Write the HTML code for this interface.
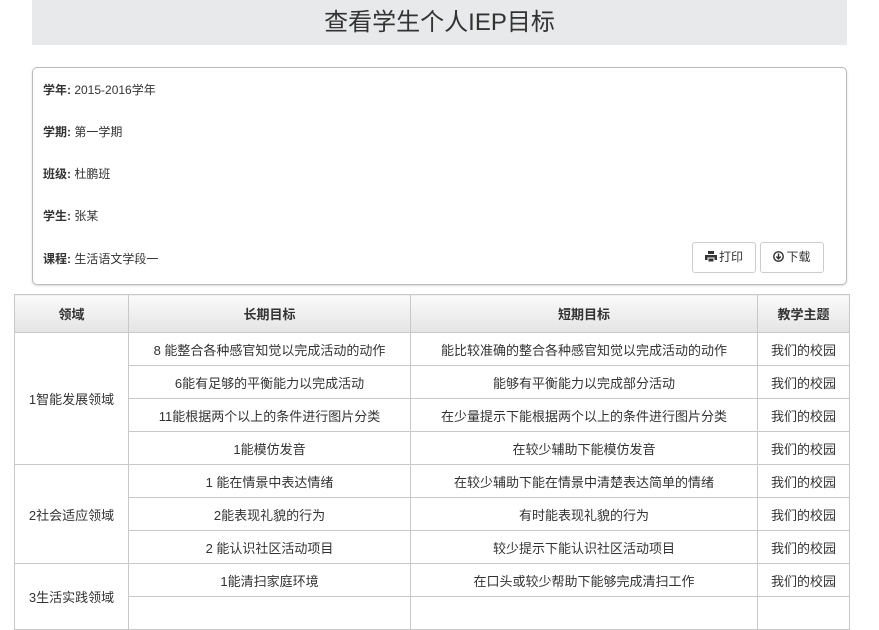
<!DOCTYPE html>
<html><head><meta charset="utf-8"><style>
body{margin:0;width:879px;height:600px;overflow:hidden;background:#fff;font-family:"Liberation Sans","Noto Sans CJK SC",sans-serif;color:#333}
.hd{position:absolute;left:32px;top:0;width:815px;height:45px;background:#e8e9ea;text-align:center;font-size:24px;line-height:46px;color:#333}
.box{position:absolute;left:32px;top:67px;width:813px;height:216px;border:1px solid #bbb;border-radius:5px;box-shadow:0 1px 2px rgba(0,0,0,.15)}
.row{position:absolute;left:10px;font-size:12px;line-height:14px}
.btn{position:absolute;top:174px;height:29px;width:62px;border:1px solid #ccc;border-radius:3px;font-size:12px;line-height:29px;text-align:center;background:#fff}
.btn svg{vertical-align:-1px;margin-right:2px}
table{position:absolute;left:14px;top:294px;width:836px;border-collapse:collapse;font-size:13px}
td,th{border:1px solid #c8c8c8;text-align:center;height:32px;padding:0}
th{height:37px;background:linear-gradient(#fafafa,#e4e4e4);font-weight:bold}
</style></head><body>
<div class="hd">查看学生个人IEP目标</div>
<div class="box">
<div class="row" style="top:15px"><b>学年:</b> 2015-2016学年</div>
<div class="row" style="top:57px"><b>学期:</b> 第一学期</div>
<div class="row" style="top:99px"><b>班级:</b> 杜鹏班</div>
<div class="row" style="top:141px"><b>学生:</b> 张某</div>
<div class="row" style="top:184px"><b>课程:</b> 生活语文学段一</div>
<div class="btn" style="left:659px"><svg width="12" height="11" viewBox="0 0 12 11"><rect x="3" y="0" width="6" height="3" fill="#333"/><rect x="0" y="4" width="12" height="5" fill="#333"/><rect x="3" y="7" width="6" height="4" fill="#333" stroke="#fff" stroke-width="1"/></svg>打印</div>
<div class="btn" style="left:727px"><svg width="11" height="11" viewBox="0 0 11 11"><circle cx="5.5" cy="5.5" r="4.7" fill="none" stroke="#333" stroke-width="1.4"/><path d="M5.5 2.5v5M3.3 5.5l2.2 2.3 2.2-2.3" fill="none" stroke="#333" stroke-width="1.4"/></svg>下载</div>
</div>
<table>
<tr><th style="width:113px">领域</th><th style="width:281px">长期目标</th><th style="width:346px">短期目标</th><th>教学主题</th></tr>
<tr><td rowspan="4">1智能发展领域</td><td>8 能整合各种感官知觉以完成活动的动作</td><td>能比较准确的整合各种感官知觉以完成活动的动作</td><td>我们的校园</td></tr>
<tr><td>6能有足够的平衡能力以完成活动</td><td>能够有平衡能力以完成部分活动</td><td>我们的校园</td></tr>
<tr><td>11能根据两个以上的条件进行图片分类</td><td>在少量提示下能根据两个以上的条件进行图片分类</td><td>我们的校园</td></tr>
<tr><td>1能模仿发音</td><td>在较少辅助下能模仿发音</td><td>我们的校园</td></tr>
<tr><td rowspan="3">2社会适应领域</td><td>1 能在情景中表达情绪</td><td>在较少辅助下能在情景中清楚表达简单的情绪</td><td>我们的校园</td></tr>
<tr><td>2能表现礼貌的行为</td><td>有时能表现礼貌的行为</td><td>我们的校园</td></tr>
<tr><td>2 能认识社区活动项目</td><td>较少提示下能认识社区活动项目</td><td>我们的校园</td></tr>
<tr><td rowspan="2">3生活实践领域</td><td>1能清扫家庭环境</td><td>在口头或较少帮助下能够完成清扫工作</td><td>我们的校园</td></tr>
<tr><td>&nbsp;</td><td></td><td></td></tr>
</table>
</body></html>
